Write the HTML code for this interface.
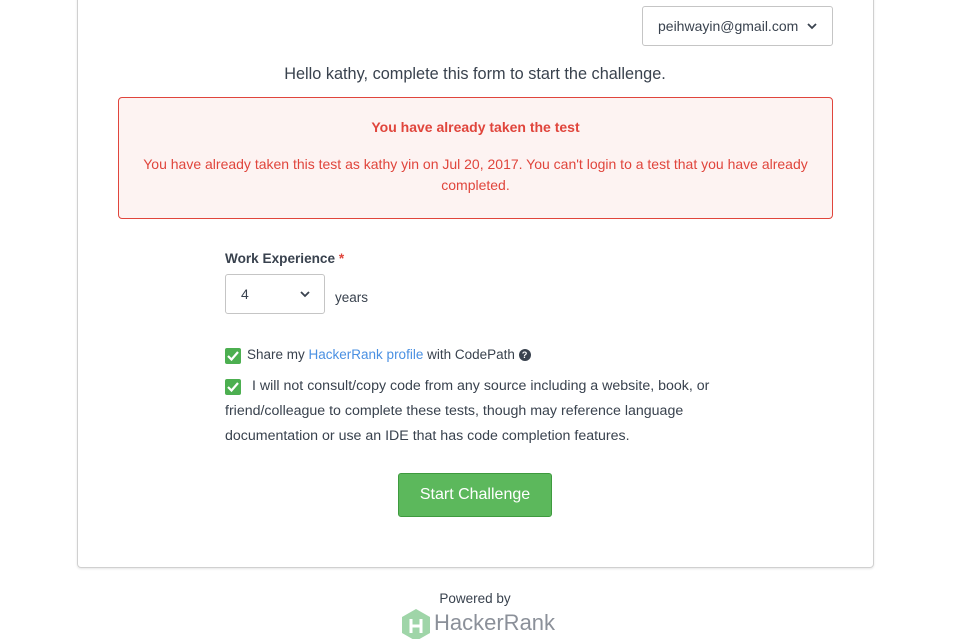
<!DOCTYPE html>
<html><head><style>
body{margin:0;width:961px;height:632px;overflow:hidden;background:#fff;font-family:"Liberation Sans",sans-serif;color:#39424e;position:relative}
.card{position:absolute;left:77px;top:-10px;width:795px;height:576px;border:1px solid #d0d0d0;border-radius:4px;box-shadow:0 1px 2px rgba(0,0,0,.1)}
.abs{position:absolute}
.cb{position:absolute;width:16px;height:16px;background:#4caf50;border-radius:2px}
.cb svg{position:absolute;left:1px;top:1px}
</style></head><body>
<div class="card"></div>
<div class="abs" style="left:642px;top:6px;width:191px;height:40px;border:1px solid #c5c5c5;border-radius:3px;font-size:14px;line-height:38px;padding-left:15px;box-sizing:border-box">peihwayin@gmail.com<svg class="abs" style="left:164px;top:16px" width="10" height="7"><path d="M1 1l4 4 4-4" stroke="#39424e" stroke-width="1.8" fill="none"/></svg></div>
<div class="abs" style="left:0;width:950px;top:65px;text-align:center;font-size:16.3px;color:#39424e">Hello kathy, complete this form to start the challenge.</div>
<div class="abs" style="left:118px;top:97px;width:715px;height:122px;box-sizing:border-box;border:1px solid #e0453c;border-radius:4px;background:#fdf3f2;color:#e0453c;text-align:center;font-size:14px">
<div style="font-weight:bold;margin-top:21px">You have already taken the test</div>
<div style="margin:19px 20px 0;line-height:21px">You have already taken this test as kathy yin on Jul 20, 2017. You can't login to a test that you have already completed.</div></div>
<div class="abs" style="left:225px;top:251px;font-size:13.6px;font-weight:bold">Work Experience <span style="color:#e0453c">*</span></div>
<div class="abs" style="left:225px;top:274px;width:100px;height:40px;box-sizing:border-box;border:1px solid #c5c5c5;border-radius:3px;font-size:14px;line-height:38px;padding-left:15px">4<svg class="abs" style="left:74px;top:16px" width="10" height="7"><path d="M1 1l4 4 4-4" stroke="#39424e" stroke-width="1.8" fill="none"/></svg></div>
<div class="abs" style="left:335px;top:290px;font-size:13.5px">years</div>
<div class="cb" style="left:225px;top:348px"><svg width="14" height="14"><path d="M2 7l3.5 3.5L12 3" stroke="#fff" stroke-width="2.2" fill="none"/></svg></div>
<div class="abs" style="left:247px;top:347px;font-size:13.5px">Share my <span style="color:#4a90e2">HackerRank profile</span> with CodePath <span style="display:inline-block;width:12px;height:12px;border-radius:50%;background:#39424e;color:#fff;font-size:9px;line-height:12px;text-align:center;font-weight:bold;vertical-align:1px">?</span></div>
<div class="cb" style="left:225px;top:379px"><svg width="14" height="14"><path d="M2 7l3.5 3.5L12 3" stroke="#fff" stroke-width="2.2" fill="none"/></svg></div>
<div class="abs" style="left:225px;top:374px;width:510px;font-size:14.2px;line-height:25px;text-indent:27px">I will not consult/copy code from any source including a website, book, or friend/colleague to complete these tests, though may reference language documentation or use an IDE that has code completion features.</div>
<div class="abs" style="left:398px;top:473px;width:154px;height:44px;box-sizing:border-box;background:#5cb85c;border:1px solid #3e9a3e;border-radius:3px;color:#fff;font-size:16px;line-height:42px;text-align:center">Start Challenge</div>
<div class="abs" style="left:0;width:950px;top:591px;text-align:center;font-size:13.5px">Powered by</div>
<svg class="abs" style="left:400px;top:609px" width="32" height="30"><path d="M16 0l14 8v16l-14 8-14-8V8z" fill="#9fd5a8"/><path d="M11 10v14M21 10v14M11 17h10" stroke="#fff" stroke-width="3"/></svg>
<div class="abs" style="left:434px;top:610px;font-size:22px;color:#8b9099">HackerRank</div>
</body></html>
